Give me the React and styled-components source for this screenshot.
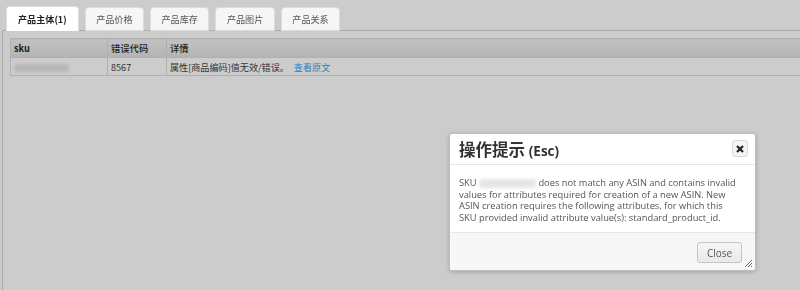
import React from "react";
import styled, { createGlobalStyle } from "styled-components";

const GlobalStyle = createGlobalStyle`
  html, body {
    margin: 0;
    padding: 0;
    background: #ffffff;
    overflow: hidden;
  }
  body {
    font-family: "Noto Sans CJK SC", "Open Sans", sans-serif;
    color: #333;
  }
`;

const tabs = ["产品主体(1)", "产品价格", "产品库存", "产品图片", "产品关系"];

const App = () => {
  return (
    <>
      <GlobalStyle />
      <Page>
        <TabList>
          {tabs.map((t, i) => (
            <Tab key={t} active={i === 0}>
              {t}
            </Tab>
          ))}
        </TabList>
        <Panel>
          <Table>
            <thead>
              <tr>
                <Th width="90px" bold>
                  sku
                </Th>
                <Th width="52px">错误代码</Th>
                <Th>详情</Th>
              </tr>
            </thead>
            <tbody>
              <tr>
                <Td>
                  <Blur width="55px" />
                </Td>
                <Td>8567</Td>
                <Td>
                  属性[商品编码]值无效/错误。
                  <LinkText>查看原文</LinkText>
                </Td>
              </tr>
            </tbody>
          </Table>
        </Panel>
      </Page>

      <Overlay />

      <Dialog>
        <DialogHead>
          <Title>
            操作提示 <small>(Esc)</small>
          </Title>
          <CloseX>
            <svg width="8" height="8" viewBox="0 0 8 8">
              <path d="M1 1 L7 7 M7 1 L1 7" stroke="#222" strokeWidth="2.2" />
            </svg>
          </CloseX>
        </DialogHead>
        <DialogBody>
          SKU <Blur width="57px" inline /> does not match any ASIN and contains
          invalid
          <br />
          values for attributes required for creation of a new ASIN. New
          <br />
          ASIN creation requires the following attributes, for which this
          <br />
          SKU provided invalid attribute value(s): standard_product_id.
        </DialogBody>
        <DialogFoot>
          <Button>Close</Button>
        </DialogFoot>
        <Grip width="9" height="9" viewBox="0 0 9 9">
          <path d="M8 1 L1 8 M8 4 L4 8 M8 7 L7 8" stroke="#666" strokeWidth="1" />
        </Grip>
      </Dialog>
    </>
  );
};

export default App;

const Page = styled.div`
  width: 812px;
  padding: 6px 0 0 2px;
  height: 290px;
  box-sizing: border-box;
`;

const TabList = styled.div`
  display: flex;
  gap: 6px;
  padding-left: 4px;
  height: 25px;
  align-items: flex-end;
  position: relative;
  z-index: 1;
  margin-bottom: -1px;
`;

const Tab = styled.div`
  height: ${(p) => (p.active ? "25px" : "24px")};
  box-sizing: border-box;
  padding: 0 ${(p) => (p.active ? "11px" : "10.5px")};
  display: flex;
  align-items: center;
  font-size: 9.1px;
  font-weight: ${(p) => (p.active ? "bold" : "normal")};
  color: ${(p) => (p.active ? "#222" : "#555")};
  background: ${(p) => (p.active ? "#ffffff" : "#f6f6f6")};
  border: 1px solid #dcdcdc;
  border-bottom-color: ${(p) => (p.active ? "#ffffff" : "#dcdcdc")};
  border-radius: 4px 4px 0 0;
`;

const Panel = styled.div`
  border-top: 1px solid #d6d6d6;
  border-left: 1px solid #d6d6d6;
  padding: 7px 0 0 7px;
  height: 260px;
`;

const Table = styled.table`
  width: 800px;
  border-collapse: collapse;
  table-layout: fixed;
`;

const Th = styled.th`
  width: ${(p) => p.width || "auto"};
  height: 18px;
  padding: 0 3px;
  text-align: left;
  font-size: 9.3px;
  font-weight: ${(p) => (p.bold ? "bold" : "500")};
  color: #2a2a2a;
  background: linear-gradient(#f3f3f3, #e1e1e1);
  border: 1px solid #dcdcdc;
`;

const Td = styled.td`
  height: 17px;
  padding: 0 3px;
  font-size: 9.1px;
  color: #444;
  border: 1px solid #dcdcdc;
  white-space: nowrap;
`;

const LinkText = styled.a`
  color: #3a9ee9;
  margin-left: 5px;
`;

const Blur = styled.span`
  display: inline-block;
  width: ${(p) => p.width};
  height: ${(p) => (p.inline ? "9px" : "8px")};
  vertical-align: middle;
  background: #e6e6e6;
  border-radius: 3px;
  filter: blur(1.5px);
`;

const Overlay = styled.div`
  position: fixed;
  inset: 0;
  background: rgba(0, 0, 0, 0.2);
`;

const Dialog = styled.div`
  position: absolute;
  left: 449px;
  top: 133px;
  width: 307px;
  height: 138px;
  box-sizing: border-box;
  background: #ffffff;
  border: 1px solid #bdbdbd;
  border-radius: 3px;
  box-shadow: 0 1px 4px rgba(0, 0, 0, 0.2);
  display: flex;
  flex-direction: column;
  overflow: hidden;
`;

const DialogHead = styled.div`
  height: 30px;
  flex: none;
  display: flex;
  align-items: center;
  justify-content: space-between;
  padding: 0 7px 0 9px;
  border-bottom: 1px solid #e6e6e6;
`;

const Title = styled.div`
  font-size: 16.5px;
  font-weight: bold;
  color: #333;

  small {
    font-family: "Open Sans", sans-serif;
    font-size: 13.5px;
    font-weight: bold;
  }
`;

const CloseX = styled.div`
  width: 16px;
  height: 17px;
  box-sizing: border-box;
  display: flex;
  align-items: center;
  justify-content: center;
  background: #f4f4f4;
  border: 1px solid #d8d8d8;
  border-radius: 3px;
  margin-top: -1px;
`;

const DialogBody = styled.div`
  flex: none;
  height: 68px;
  box-sizing: border-box;
  padding: 12px 9px 0 9px;
  font-family: "Open Sans", sans-serif;
  font-size: 9.3px;
  line-height: 11.7px;
  color: #555;
  white-space: nowrap;
  border-bottom: 1px solid #e8e8e8;
`;

const DialogFoot = styled.div`
  flex: 1;
  background: #f7f7f7;
  display: flex;
  justify-content: flex-end;
  align-items: flex-start;
  padding: 9px 13px 0 0;
`;

const Button = styled.button`
  width: 45px;
  height: 21px;
  font-family: "Open Sans", sans-serif;
  font-size: 10px;
  color: #555;
  background: linear-gradient(#f6f6f6, #e9e9e9);
  border: 1px solid #c4c4c4;
  border-radius: 3px;
  padding: 0;
`;

const Grip = styled.svg`
  position: absolute;
  right: 2px;
  bottom: 2px;
`;
